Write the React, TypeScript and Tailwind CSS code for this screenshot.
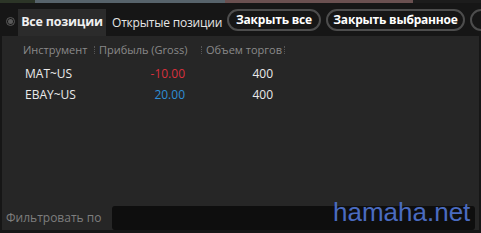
const rows = [
  { name: "MAT~US", profit: "-10.00", volume: "400", neg: true },
  { name: "EBAY~US", profit: "20.00", volume: "400", neg: false },
];

function Sep() {
  return (
    <span className="w-[4px] shrink-0 flex justify-center">
      <span className="w-0 h-[8px] border-l border-dotted border-[#555555]" />
    </span>
  );
}

export default function App() {
  return (
    <div
      className="w-[481px] h-[233px] bg-[#161616] flex flex-col overflow-hidden relative whitespace-nowrap"
      style={{ fontFamily: "'Open Sans', 'Noto Sans', sans-serif" }}
    >
      {/* top colour strip */}
      <div className="flex h-[3px] shrink-0">
        <div className="w-[35px] bg-[#2c3527]" />
        <div className="w-[190px] bg-[#57636b]" />
        <div className="w-[188px] bg-[#6a5050]" />
        <div className="flex-1 bg-[#1c1c1c]" />
      </div>

      {/* tabs + buttons */}
      <div className="flex items-end h-[33px] shrink-0 pl-[6px]">
        <div className="w-[12px] h-[30px] flex items-center shrink-0">
          <div className="w-[9px] h-[9px] rounded-full border border-[#5a5a5a] flex items-center justify-center">
            <div className="w-[5px] h-[5px] rounded-full bg-[#5a5a5a]" />
          </div>
        </div>
        <div className="w-[88px] h-[27px] shrink-0 bg-[#2b2b2b] flex items-center justify-center text-[12.5px] font-bold text-[#f0f0f0] tracking-[-0.2px]">
          Все позиции
        </div>
        <div className="w-[121px] h-[27px] shrink-0 flex items-center pl-[6px] text-[12px] text-[#e6e6e6] tracking-[-0.2px]">
          Открытые позиции
        </div>
        <div className="self-start mt-[6px] flex gap-[5px] shrink-0">
          <div className="w-[94px] h-[22px] rounded-full border-2 border-[#4d4d4d] flex items-center justify-center text-[12px] font-bold text-white tracking-[-0.2px]">
            Закрыть все
          </div>
          <div className="w-[139px] h-[22px] rounded-full border-2 border-[#4d4d4d] flex items-center justify-center text-[12px] font-bold text-white tracking-[-0.2px]">
            Закрыть выбранное
          </div>
          <div className="h-[22px] w-[30px] shrink-0 rounded-full border-2 border-[#4d4d4d]" />
        </div>
      </div>

      {/* panel */}
      <div className="flex-1 mx-[2px] mb-[3px] bg-[#262626] flex flex-col">
        <div className="pt-[6px] pl-[21px]">
          <div className="flex items-center h-[16px] text-[11px] text-[#8a8a8a]">
            <span className="w-[69px] shrink-0">Инструмент</span>
            <Sep />
            <span className="w-[103px] shrink-0 pl-[3px]">Прибыль (Gross)</span>
            <Sep />
            <span className="w-[79px] shrink-0 pl-[3px]">Объем торгов</span>
            <Sep />
          </div>
          <div className="mt-[5px] flex flex-col">
            {rows.map((r) => (
              <div key={r.name} className="flex items-center h-[21px] text-[12px]">
                <span className="w-[100px] shrink-0 pl-[2px] text-[#eaeaea]">{r.name}</span>
                <span className={`w-[62px] shrink-0 text-right ${r.neg ? "text-[#d9303d]" : "text-[#2f8ed6]"}`}>
                  {r.profit}
                </span>
                <span className="w-[88px] shrink-0 text-right text-[#eaeaea]">{r.volume}</span>
              </div>
            ))}
          </div>
        </div>
        <div className="flex-1" />
        <div className="flex items-center h-[24px] pl-[4px] pr-[4px] gap-[11px]">
          <span className="text-[12px] text-[#7e7e7e]">Фильтровать по</span>
          <div className="flex-1 h-[24px] rounded-[3px] bg-[#0e0e0e]" />
        </div>
      </div>

      <div
        className="absolute left-[333px] top-[199px] text-[26px] leading-none text-[#4a6bc0]"
        style={{ fontFamily: "'Liberation Sans', Arial, sans-serif" }}
      >
        hamaha.net
      </div>
    </div>
  );
}
